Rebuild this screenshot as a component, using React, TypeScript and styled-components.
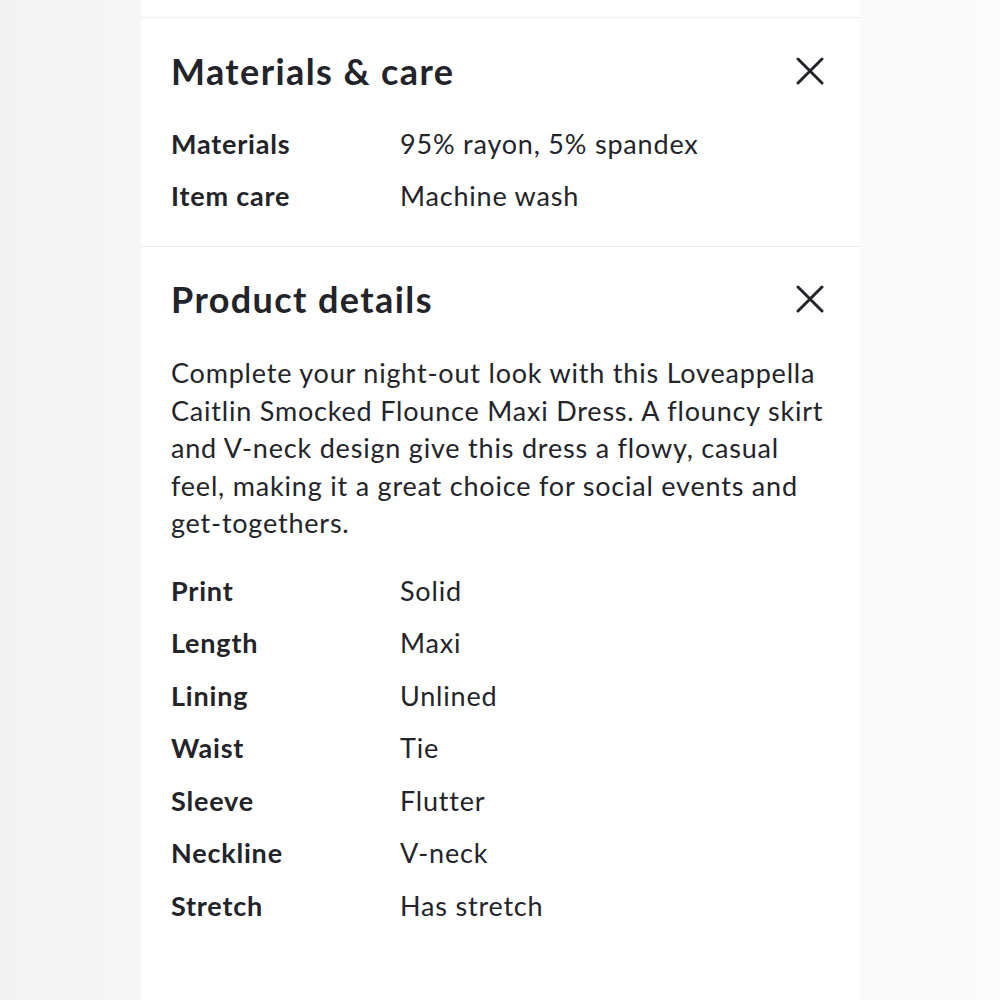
import styled, { createGlobalStyle } from 'styled-components';

const GlobalStyle = createGlobalStyle`
  html, body {
    margin: 0;
    padding: 0;
    background: #f6f6f6;
  }
  body {
    font-family: Lato, "Noto Sans", sans-serif;
    color: #23242a;
  }
`;

const Page = styled.div`
  width: 1000px;
  height: 1000px;
  display: flex;
  justify-content: center;
  background: linear-gradient(90deg, #f3f3f3 0%, #f6f6f6 14%, #fafafa 86%, #fbfbfb 100%);
  overflow: hidden;
`;

const Panel = styled.div`
  width: 719px;
  margin-left: 1px;
  background: #ffffff;
  display: flex;
  flex-direction: column;
`;

const TopStrip = styled.div`
  height: 17px;
  border-bottom: 1px solid #eeeeee;
`;

const Section = styled.section<{ last?: boolean }>`
  padding: ${(p) => (p.last ? '29px 30px 40px' : '30px 30px 24px')};
  border-bottom: ${(p) => (p.last ? 'none' : '1px solid #ececec')};
`;

const Header = styled.div<{ gap: number }>`
  display: flex;
  align-items: center;
  justify-content: space-between;
  height: 46px;
  margin-bottom: ${(p) => p.gap}px;
`;

const Title = styled.h2`
  margin: 0;
  font-size: 36px;
  font-weight: 700;
  letter-spacing: 1.4px;
`;

const CloseButton = styled.button`
  background: none;
  border: none;
  padding: 0;
  margin-right: 5px;
  width: 30px;
  height: 30px;
  display: flex;
  align-items: center;
  justify-content: center;
  color: #23242a;
  cursor: pointer;
`;

const Description = styled.p`
  margin: 0 0 22px 0;
  font-size: 27px;
  line-height: 37.6px;
  letter-spacing: 0.8px;
  white-space: nowrap;
`;

const Row = styled.div`
  display: grid;
  grid-template-columns: 229px 1fr;
  height: 52.5px;
  align-items: center;
  font-size: 27px;
  letter-spacing: 0.8px;
`;

const Label = styled.span`
  font-weight: 700;
`;

const Value = styled.span`
  font-weight: 400;
`;

const CloseIcon = () => (
  <svg width="28" height="28" viewBox="0 0 28 28" fill="none">
    <path d="M2 2 L26 26 M26 2 L2 26" stroke="currentColor" strokeWidth="3" strokeLinecap="round" />
  </svg>
);

const materials = [
  ['Materials', '95% rayon, 5% spandex'],
  ['Item care', 'Machine wash'],
];

const details = [
  ['Print', 'Solid'],
  ['Length', 'Maxi'],
  ['Lining', 'Unlined'],
  ['Waist', 'Tie'],
  ['Sleeve', 'Flutter'],
  ['Neckline', 'V-neck'],
  ['Stretch', 'Has stretch'],
];

const descriptionLines = [
  'Complete your night-out look with this Loveappella',
  'Caitlin Smocked Flounce Maxi Dress. A flouncy skirt',
  'and V-neck design give this dress a flowy, casual',
  'feel, making it a great choice for social events and',
  'get-togethers.',
];

export default function App() {
  return (
    <>
      <GlobalStyle />
      <Page>
        <Panel>
          <TopStrip />
          <Section>
            <Header gap={23}>
              <Title>Materials &amp; care</Title>
              <CloseButton aria-label="Close"><CloseIcon /></CloseButton>
            </Header>
            {materials.map(([k, v]) => (
              <Row key={k}><Label>{k}</Label><Value>{v}</Value></Row>
            ))}
          </Section>
          <Section last>
            <Header gap={32}>
              <Title>Product details</Title>
              <CloseButton aria-label="Close"><CloseIcon /></CloseButton>
            </Header>
            <Description>
              {descriptionLines.map((line, i) => (
                <span key={i}>{line}{i < descriptionLines.length - 1 && <br />}</span>
              ))}
            </Description>
            {details.map(([k, v]) => (
              <Row key={k}><Label>{k}</Label><Value>{v}</Value></Row>
            ))}
          </Section>
        </Panel>
      </Page>
    </>
  );
}
